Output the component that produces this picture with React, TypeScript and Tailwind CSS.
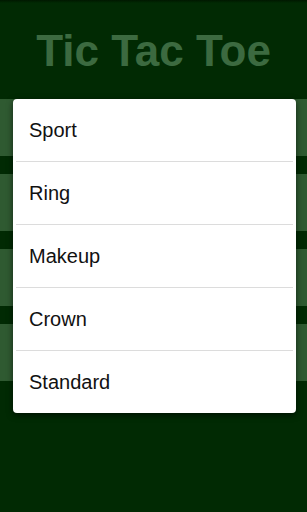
import React from 'react';

const OPTIONS = ['Sport', 'Ring', 'Makeup', 'Crown', 'Standard'];

export default function App() {
  return (
    <div className="relative h-[512px] w-full overflow-hidden bg-[#012a03] font-['Liberation_Sans',Arial,sans-serif]">
      {/* Top shade */}
      <div className="h-[3px] bg-gradient-to-b from-[#001800] to-[#012a03]" />

      {/* Title */}
      <div className="flex h-[96px] items-center justify-center">
        <h1 className="text-[44px] font-bold leading-none text-[#3c6a40]">Tic Tac Toe</h1>
      </div>

      {/* Buttons behind the dialog */}
      <div className="flex flex-col gap-[18px]">
        {[0, 1, 2, 3].map((i) => (
          <div key={i} className="h-[57px] bg-[#2f5a31]" />
        ))}
      </div>

      {/* Dialog */}
      <div className="absolute left-[13px] top-[99px] w-[283px] overflow-hidden rounded-[4px] bg-white shadow-[0_2px_6px_rgba(0,0,0,0.6)]">
        {OPTIONS.map((label, i) => (
          <div key={label}>
            {i > 0 && <div className="mx-[3px] h-px bg-[#dcdcdc]" />}
            <div className="flex h-[62px] items-center px-4 text-[20px] text-[#111]">{label}</div>
          </div>
        ))}
      </div>
    </div>
  );
}
